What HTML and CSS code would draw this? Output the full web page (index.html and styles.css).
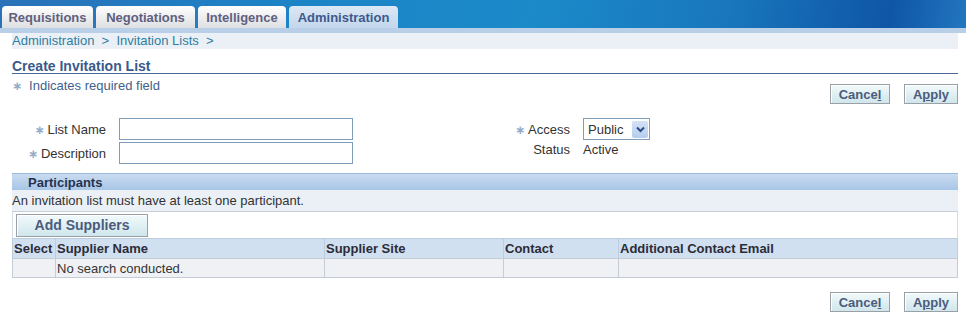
FILE: index.html
```html
<!DOCTYPE html>
<html>
<head>
    <title>Create Invitation List</title>
    <meta name="viewport" content="width=device-width, initial-scale=1">
    <link rel="stylesheet" href="styles.css">
</head>
<body>
    <div class="brand">
        <div class="tabs">
            <div class="tab" style="width:91px">Requisitions</div>
            <div class="tab" style="width:99px">Negotiations</div>
            <div class="tab" style="width:88px">Intelligence</div>
            <div class="tab active" style="width:109px">Administration</div>
        </div>
    </div>
    <div class="tabline"></div>

    <div class="page">
        <div class="crumbs">Administration &nbsp;&gt;&nbsp; Invitation Lists &nbsp;&gt;</div>

        <h1 class="title">Create Invitation List</h1>

        <div class="topbar">
            <div class="note"><span class="req wide">&#x2217;</span>Indicates required field</div>
            <div class="actions">
                <button class="btn" style="width:60px">Cance<u>l</u></button>
                <button class="btn" style="width:54px">A<u>p</u>ply</button>
            </div>
        </div>

        <div class="form">
            <div class="grid left">
                <label><span class="req">&#x2217;</span>List Name</label>
                <div class="input"></div>
                <label><span class="req">&#x2217;</span>Description</label>
                <div class="input"></div>
            </div>
            <div class="grid right">
                <label><span class="req">&#x2217;</span>Access</label>
                <div class="select">
                    <span>Public</span>
                    <span class="arrow">
                        <svg width="9" height="7" viewBox="0 0 9 7"><path d="M1 1.5 L4.5 5 L8 1.5" fill="none" stroke="#2b4a8a" stroke-width="2"/></svg>
                    </span>
                </div>
                <label>Status</label>
                <div class="value">Active</div>
            </div>
        </div>

        <div class="section">
            <div class="sechead">Participants</div>
            <div class="info">An invitation list must have at least one participant.</div>
            <div class="toolbar">
                <button class="btn big">Add Suppliers</button>
            </div>
            <table class="results">
                <tr>
                    <th style="width:40px">Select</th>
                    <th style="width:266px">Supplier Name</th>
                    <th style="width:176px">Supplier Site</th>
                    <th style="width:112px">Contact</th>
                    <th>Additional Contact Email</th>
                </tr>
                <tr>
                    <td></td>
                    <td>No search conducted.</td>
                    <td></td>
                    <td></td>
                    <td></td>
                </tr>
            </table>
        </div>

        <div class="actions bottom">
            <button class="btn" style="width:60px">Cance<u>l</u></button>
            <button class="btn" style="width:54px">A<u>p</u>ply</button>
        </div>
    </div>
</body>
</html>
```

FILE: styles.css
```css
body {
    margin: 0;
    font-family: "Liberation Sans", Arial, sans-serif;
    font-size: 13px;
    color: #333;
    background: #fff;
}
.brand {
    height: 28px;
    background: linear-gradient(100deg, #2a72b8 0%, #1c84c6 30%, #1b8ac9 55%, #1977bd 75%, #0f56a6 92%, #2276c0 100%);
    display: flex;
    align-items: flex-end;
}
.tabs {
    display: flex;
    gap: 3px;
    padding-left: 2px;
}
.tab {
    height: 22px;
    line-height: 23px;
    text-align: center;
    font-size: 13px;
    font-weight: bold;
    color: #5f6080;
    background: linear-gradient(#ffffff, #dedfe2);
    border-radius: 4px 4px 0 0;
}
.tab.active {
    background: linear-gradient(#dce8f5, #c3d6ec);
    color: #3c5a8e;
}
.tabline {
    height: 5px;
    background: #b9cfe7;
}
.page {
    margin: 0 8px 0 12px;
}
.crumbs {
    height: 16px;
    line-height: 16px;
    background: #eaf0f6;
    color: #2f7ea0;
}
.title {
    margin: 10px 0 0;
    font-size: 14px;
    font-weight: bold;
    color: #3a5a8a;
    line-height: 14px;
    border-bottom: 1px solid #4a6896;
}
.topbar {
    display: flex;
    justify-content: space-between;
    align-items: flex-start;
}
.note {
    color: #3f5f8c;
    line-height: 24px;
}
.req {
    font-family: "DejaVu Sans", sans-serif;
    color: #93acca;
    font-size: 12px;
    font-weight: bold;
    margin-right: 3px;
}
.req.wide {
    margin-left: 0;
    margin-right: 7px;
}
.actions {
    display: flex;
    gap: 14px;
    margin-top: 10px;
}
.btn {
    height: 20px;
    padding: 0;
    font-family: "Liberation Sans", Arial, sans-serif;
    font-size: 13px;
    font-weight: bold;
    color: #4b5b7c;
    background: linear-gradient(#f2fafb, #cfe6ec);
    border: 1px solid #9b9fa6;
    box-shadow: inset 1px 1px 0 #fff;
}
.btn u {
    text-decoration-thickness: 1px;
}
.form {
    display: flex;
    margin-top: 14px;
}
.grid {
    display: grid;
    column-gap: 13px;
    row-gap: 2px;
    align-items: center;
}
.grid label {
    text-align: right;
    color: #333;
}
.left {
    grid-template-columns: 94px 234px;
}
.right {
    margin-left: 128px;
    grid-template-columns: 89px auto;
    row-gap: 0;
    grid-auto-rows: 22px 18px;
}
.input {
    height: 20px;
    border: 1px solid #7f9cba;
    background: #fff;
}
.select {
    height: 20px;
    border: 1px solid #7f9cba;
    display: flex;
    align-items: center;
    justify-content: space-between;
    padding-left: 4px;
    font-size: 13px;
    width: 61px;
}
.arrow {
    width: 16px;
    height: 17px;
    margin-right: 1px;
    background: linear-gradient(#d4e2f6, #b6cdee);
    border-radius: 2px;
    display: flex;
    align-items: center;
    justify-content: center;
}
.value {
    color: #333;
}
.section {
    margin-top: 9px;
}
.sechead {
    height: 16px;
    line-height: 17px;
    border-top: 1px solid #9cb9dc;
    background: linear-gradient(#c9dcf0, #a8c5e6);
    padding-left: 16px;
    font-weight: bold;
    color: #253350;
}
.info {
    height: 21px;
    line-height: 21px;
    background: #eaf0f6;
    border-bottom: 1px solid #c6d0dc;
}
.toolbar {
    height: 26px;
    display: flex;
    align-items: center;
    padding-left: 3px;
    border-left: 1px solid #d6dde6;
    border-right: 1px solid #d6dde6;
}
.btn.big {
    width: 132px;
    height: 23px;
    font-size: 14px;
}
.results {
    width: 100%;
    border-collapse: collapse;
}
.results th {
    height: 19px;
    padding: 0 1px;
    text-align: left;
    background: #d0e0f1;
    color: #2c2c38;
    border: 1px solid #bccde0;
    border-bottom: none;
}
.results td {
    height: 18px;
    padding: 0 1px;
    background: #eff1f4;
    border: 1px solid #c6ccd6;
}
.actions.bottom {
    justify-content: flex-end;
    margin-top: 14px;
}
```
